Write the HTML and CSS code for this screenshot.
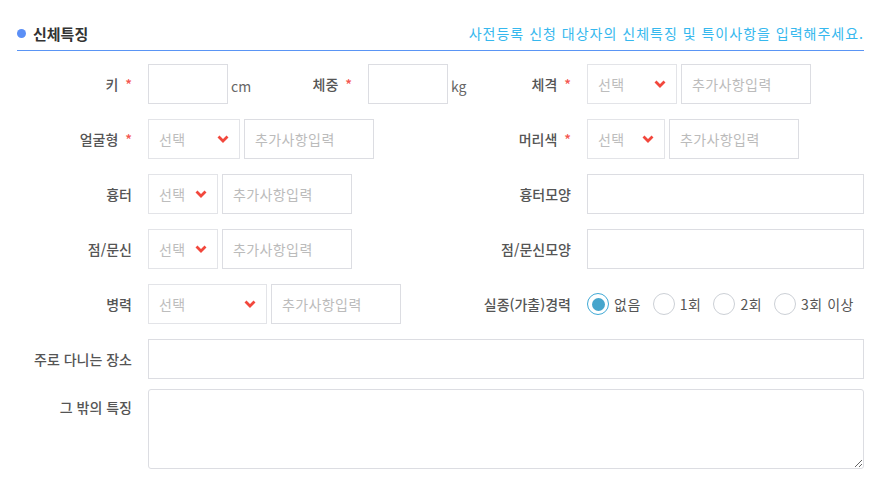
FILE: index.html
```html
<!DOCTYPE html>
<html lang="ko">
<head>
    <meta charset="UTF-8">
    <title>신체특징</title>
    <link rel="stylesheet" href="styles.css">
</head>
<body>
    <div class="section">
        <div class="section-head">
            <h2 class="title"><span class="dot"></span>신체특징</h2>
            <p class="guide">사전등록 신청 대상자의 신체특징 및 특이사항을 입력해주세요.</p>
        </div>

        <!-- 키 / 체중 / 체격 -->
        <div class="row">
            <div class="half">
                <label class="label">키 <em>*</em></label>
                <input class="input w80" type="text">
                <span class="unit">cm</span>
                <label class="label lbl-weight">체중 <em>*</em></label>
                <input class="input w80" type="text">
                <span class="unit">kg</span>
            </div>
            <div class="half right">
                <label class="label">체격 <em>*</em></label>
                <div class="select w90"><span>선택</span><svg class="chev" viewBox="0 0 12 8"><path d="M1.5 1.5 L6 6 L10.5 1.5"/></svg></div>
                <input class="input w130" type="text" placeholder="추가사항입력">
            </div>
        </div>

        <!-- 얼굴형 / 머리색 -->
        <div class="row">
            <div class="half">
                <label class="label">얼굴형 <em>*</em></label>
                <div class="select w92"><span>선택</span><svg class="chev" viewBox="0 0 12 8"><path d="M1.5 1.5 L6 6 L10.5 1.5"/></svg></div>
                <input class="input w130" type="text" placeholder="추가사항입력">
            </div>
            <div class="half right">
                <label class="label">머리색 <em>*</em></label>
                <div class="select w78"><span>선택</span><svg class="chev" viewBox="0 0 12 8"><path d="M1.5 1.5 L6 6 L10.5 1.5"/></svg></div>
                <input class="input w130" type="text" placeholder="추가사항입력">
            </div>
        </div>

        <!-- 흉터 -->
        <div class="row">
            <div class="half">
                <label class="label">흉터</label>
                <div class="select w70"><span>선택</span><svg class="chev" viewBox="0 0 12 8"><path d="M1.5 1.5 L6 6 L10.5 1.5"/></svg></div>
                <input class="input w130" type="text" placeholder="추가사항입력">
            </div>
            <div class="half right">
                <label class="label">흉터모양</label>
                <input class="input grow" type="text">
            </div>
        </div>

        <!-- 점/문신 -->
        <div class="row">
            <div class="half">
                <label class="label">점/문신</label>
                <div class="select w70"><span>선택</span><svg class="chev" viewBox="0 0 12 8"><path d="M1.5 1.5 L6 6 L10.5 1.5"/></svg></div>
                <input class="input w130" type="text" placeholder="추가사항입력">
            </div>
            <div class="half right">
                <label class="label">점/문신모양</label>
                <input class="input grow" type="text">
            </div>
        </div>

        <!-- 병력 / 실종경력 -->
        <div class="row">
            <div class="half">
                <label class="label">병력</label>
                <div class="select w119"><span>선택</span><svg class="chev" viewBox="0 0 12 8"><path d="M1.5 1.5 L6 6 L10.5 1.5"/></svg></div>
                <input class="input w130" type="text" placeholder="추가사항입력">
            </div>
            <div class="half right">
                <label class="label">실종(가출)경력</label>
                <div class="radios">
                    <label class="radio"><input type="radio" name="missing" checked><i></i>없음</label>
                    <label class="radio"><input type="radio" name="missing"><i></i>1회</label>
                    <label class="radio"><input type="radio" name="missing"><i></i>2회</label>
                    <label class="radio"><input type="radio" name="missing"><i></i>3회 이상</label>
                </div>
            </div>
        </div>

        <div class="row">
            <label class="label">주로 다니는 장소</label>
            <input class="input grow" type="text">
        </div>

        <div class="row row-area">
            <label class="label">그 밖의 특징</label>
            <textarea class="textarea"></textarea>
        </div>
    </div>
</body>
</html>
```

FILE: styles.css
```css
body {
    margin: 0;
    font-family: "Noto Sans CJK KR", "Noto Sans", sans-serif;
    font-size: 14px;
    color: #555;
    background: #fff;
}

.section {
    width: 847px;
    margin-left: 17px;
}

.section-head {
    display: flex;
    align-items: center;
    justify-content: space-between;
    height: 34px;
    padding-top: 16px;
    border-bottom: 1px solid #5a95f5;
}

.title {
    display: flex;
    align-items: center;
    margin: 0;
    font-size: 15px;
    font-weight: bold;
    color: #333;
}

.dot {
    width: 9px;
    height: 9px;
    border-radius: 50%;
    background: #5b8ff6;
    margin-right: 7px;
}

.guide {
    margin: 0;
    font-size: 14px;
    letter-spacing: 1px;
    color: #36b8ee;
}

.row {
    display: flex;
    align-items: center;
    height: 40px;
    margin-top: 15px;
}

.section-head + .row {
    margin-top: 13px;
}

.half {
    display: flex;
    align-items: center;
    width: 423px;
}

.half.right {
    flex: 1;
}

.label {
    flex: none;
    width: 115px;
    padding-right: 16px;
    text-align: right;
    font-weight: 500;
    color: #555;
}

.half.right .label {
    width: 131px;
}

.label em {
    font-style: normal;
    color: #f4574f;
    margin-left: 3px;
}

.lbl-weight {
    width: 102px;
}

.input {
    box-sizing: border-box;
    height: 40px;
    border: 1px solid #dcdde2;
    padding: 0 10px;
    font-family: inherit;
    font-size: 14px;
    letter-spacing: 0.4px;
    color: #555;
    outline: none;
}

.input::placeholder {
    color: #bbb;
}

.unit {
    width: 19px;
    margin-left: 3px;
    font-size: 14px;
    color: #666;
    padding-top: 4px;
}

.w80 { width: 80px; }
.w130 { width: 130px; }
.grow { flex: 1; }

.select {
    box-sizing: border-box;
    display: flex;
    align-items: center;
    height: 40px;
    padding: 0 10px;
    margin-right: 4px;
    border: 1px solid #e3e4e8;
    color: #bdbdbd;
    letter-spacing: 0.4px;
}

.w70 { width: 70px; }
.w78 { width: 78px; }
.w90 { width: 90px; }
.w92 { width: 92px; }
.w119 { width: 119px; }

.chev {
    width: 12px;
    height: 8px;
    margin-left: auto;
    fill: none;
    stroke: #f2473c;
    stroke-width: 2.8;
}

.radios {
    display: flex;
    align-items: center;
    white-space: nowrap;
}

.radio {
    flex: none;
    display: flex;
    align-items: center;
    margin-right: 12px;
    color: #555;
    letter-spacing: 0.5px;
}

.radio:last-child {
    margin-right: 0;
}

.radio input {
    display: none;
}

.radio i {
    box-sizing: border-box;
    width: 22px;
    height: 22px;
    margin-right: 5px;
    border: 1px solid #ccd0d6;
    border-radius: 50%;
    display: flex;
    align-items: center;
    justify-content: center;
}

.radio input:checked + i {
    border-color: #3fa9d6;
}

.radio input:checked + i::after {
    content: "";
    width: 13px;
    height: 13px;
    border-radius: 50%;
    background: #46a5cc;
}

.row-area {
    height: 80px;
    align-items: flex-start;
    margin-top: 10px;
}

.row-area .label {
    padding-top: 8px;
}

.textarea {
    box-sizing: border-box;
    flex: 1;
    height: 80px;
    border: 1px solid #dcdde2;
    border-radius: 3px;
    font-family: inherit;
    outline: none;
}
```
